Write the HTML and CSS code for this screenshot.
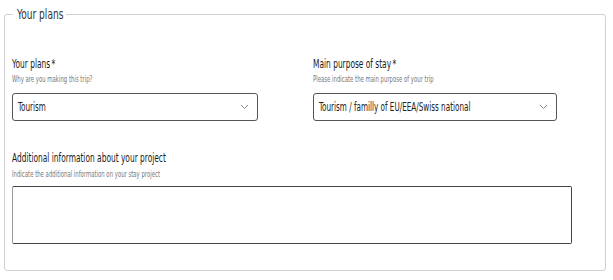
FILE: index.html
```html
<!DOCTYPE html>
<html lang="en">
<head>
    <meta charset="UTF-8">
    <meta name="viewport" content="width=device-width, initial-scale=1.0">
    <title>Your plans</title>
    <link rel="stylesheet" href="styles.css">
</head>
<body>
    <fieldset class="plans">
        <legend><span class="narrow legend-text">Your plans</span></legend>

        <div class="row">
            <div class="field">
                <label class="label"><span class="narrow">Your plans<span class="req">*</span></span></label>
                <div class="hint"><span class="narrow">Why are you making this trip?</span></div>
                <div class="select select-short">
                    <span class="narrow">Tourism</span>
                    <svg class="chevron" width="9" height="6" viewBox="0 0 9 6"><path d="M1 1 L4.5 4.5 L8 1" fill="none" stroke="#888" stroke-width="1"/></svg>
                </div>
            </div>
            <div class="field">
                <label class="label"><span class="narrow">Main purpose of stay<span class="req">*</span></span></label>
                <div class="hint"><span class="narrow">Please indicate the main purpose of your trip</span></div>
                <div class="select select-long">
                    <span class="narrow">Tourism / familly of EU/EEA/Swiss national</span>
                    <svg class="chevron" width="9" height="6" viewBox="0 0 9 6"><path d="M1 1 L4.5 4.5 L8 1" fill="none" stroke="#888" stroke-width="1"/></svg>
                </div>
            </div>
        </div>

        <div class="field field-wide">
            <label class="label"><span class="narrow">Additional information about your project</span></label>
            <div class="hint"><span class="narrow">Indicate the additional information on your stay project</span></div>
            <textarea class="area"></textarea>
        </div>
    </fieldset>
</body>
</html>
```

FILE: styles.css
```css
/* styles.css */
body {
    margin: 0;
    padding: 0;
    background: #fff;
    font-family: "DejaVu Sans Condensed", "Liberation Sans", sans-serif;
    color: #222;
}

/* the form was captured squeezed sideways */
.narrow {
    display: inline-block;
    white-space: nowrap;
    transform: scaleX(0.69);
    transform-origin: left center;
}

.plans {
    margin: 6px 0 0 4px;
    width: 586px;
    padding: 35px 7px 26px 7px;
    border: 1px solid #d0d0d0;
    border-radius: 3px;
}

.plans legend {
    padding: 0 4px;
    margin-left: 1px;
    font-size: 14px;
    line-height: 16px;
    color: #333;
}

.legend-text {
    transform: scaleX(0.72);
    margin-right: -19px;
}

.row {
    display: grid;
    grid-template-columns: 301px 1fr;
}

.label {
    display: block;
    font-size: 12px;
    line-height: 14px;
    color: #1a1a1a;
}

.req {
    margin-left: 2px;
}

.hint {
    margin-top: 2px;
    font-size: 9px;
    line-height: 12px;
    color: #777;
}

.hint .narrow {
    transform: scaleX(0.66);
}

.select {
    display: flex;
    align-items: center;
    justify-content: space-between;
    box-sizing: border-box;
    height: 28px;
    margin-top: 8px;
    padding: 0 8px 0 5px;
    border: 1px solid #555;
    border-radius: 3px;
    font-size: 11.5px;
    color: #222;
}

.select .narrow {
    transform: scaleX(0.7);
}

.select-short {
    width: 246px;
}

.select-long {
    width: 244px;
}

.field-wide {
    margin-top: 30px;
}

.field-wide .hint {
    margin-top: 3px;
}

.area {
    display: block;
    box-sizing: border-box;
    width: 560px;
    height: 58px;
    margin: 6px 0 0 0;
    border: 1px solid #444;
    border-left-color: #999;
    border-radius: 2px;
    resize: none;
}
```
